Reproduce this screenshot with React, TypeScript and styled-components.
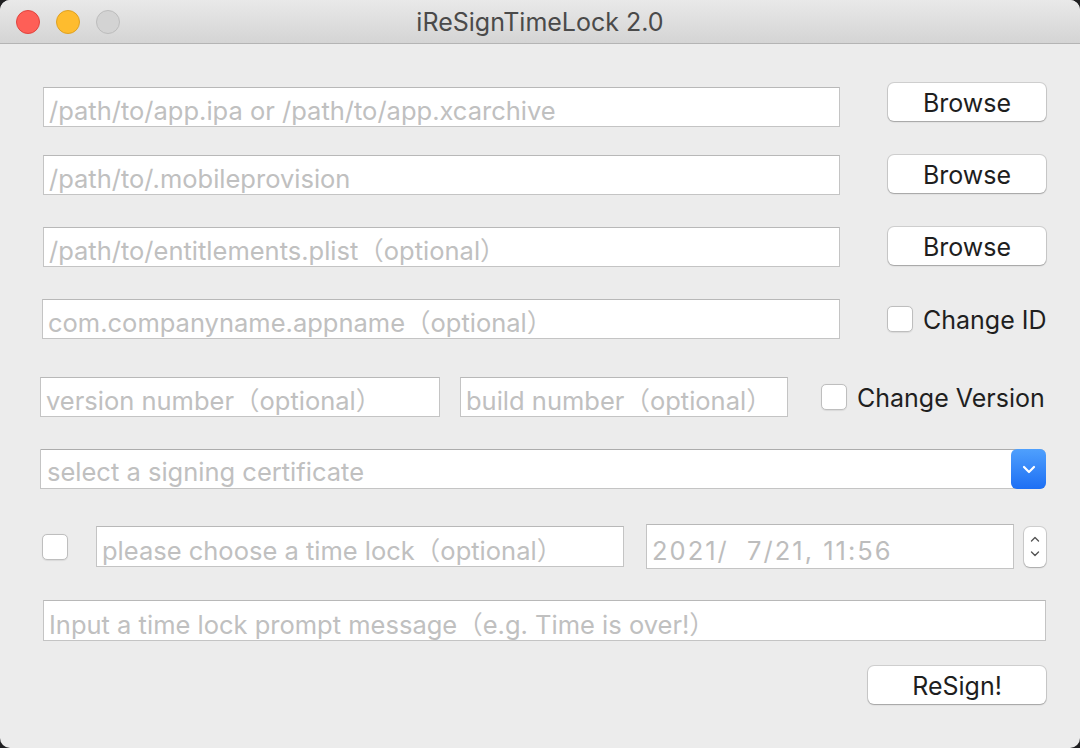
import React from "react";
import styled, { createGlobalStyle } from "styled-components";

const GlobalStyle = createGlobalStyle`
  html, body {
    margin: 0;
    padding: 0;
    background: #1f1f21;
  }
  * { box-sizing: border-box; }
`;

const FONT = `Inter, "Noto Sans", "Noto Sans CJK SC", sans-serif`;

const Window = styled.div`
  width: 1080px;
  height: 748px;
  border-radius: 10px;
  overflow: hidden;
  background: #ececec;
  font-family: ${FONT};
  display: flex;
  flex-direction: column;
`;

const TitleBar = styled.div`
  height: 44px;
  flex-shrink: 0;
  position: relative;
  display: flex;
  align-items: center;
  justify-content: center;
  background: linear-gradient(#e9e9e9, #d4d4d4);
  border-bottom: 1px solid #b4b4b4;
`;

const Lights = styled.div`
  position: absolute;
  left: 16px;
  top: 10px;
  display: flex;
  gap: 16px;
`;

const Light = styled.span<{ $fill: string; $edge: string }>`
  width: 24px;
  height: 24px;
  border-radius: 50%;
  background: ${(p) => p.$fill};
  border: 1px solid ${(p) => p.$edge};
`;

const Title = styled.div`
  font-size: 25px;
  color: #4a4a4a;
  margin-top: 1px;
`;

const Body = styled.div`
  flex: 1;
  display: flex;
  flex-direction: column;
  padding: 0 34px 0 40px;
`;

const Row = styled.div<{ $top: number; $indent?: number; $align?: string }>`
  display: flex;
  align-items: ${(p) => p.$align || "center"};
  margin-top: ${(p) => p.$top}px;
  padding-left: ${(p) => p.$indent || 0}px;
`;

const Field = styled.input<{ $w?: number; $h?: number; $offset?: number; $spread?: number }>`
  width: ${(p) => (p.$w ? `${p.$w}px` : "auto")};
  flex: ${(p) => (p.$w ? "none" : "1")};
  min-width: 0;
  height: ${(p) => p.$h || 40}px;
  margin-top: ${(p) => p.$offset || 0}px;
  background: #fff;
  border: 1px solid #c4c4c4;
  border-top-color: #b8b8b8;
  padding: 7px 0 0 5px;
  font-family: ${FONT};
  font-size: 25.5px;
  letter-spacing: ${(p) => p.$spread || 0}px;
  color: #bdbdbd;
  outline: none;
  white-space: pre;
  &::placeholder {
    color: #c0c0c0;
  }
`;

const Button = styled.button<{ $w: number }>`
  width: ${(p) => p.$w}px;
  height: 38px;
  background: #fff;
  border: none;
  border-radius: 6px;
  box-shadow: 0 0 0 1px rgba(0, 0, 0, 0.12), 0 1px 1.5px rgba(0, 0, 0, 0.22);
  font-family: ${FONT};
  font-size: 25px;
  color: #1e1e1e;
  padding: 1px 0 0;
  flex-shrink: 0;
`;

const Gap = styled.div<{ $w: number }>`
  width: ${(p) => p.$w}px;
  flex-shrink: 0;
`;

const Box = styled.span`
  width: 26px;
  height: 26px;
  flex-shrink: 0;
  background: #fff;
  border: 1px solid #bebebe;
  border-radius: 5px;
  box-shadow: 0 0.5px 1px rgba(0, 0, 0, 0.08);
`;

const Label = styled.span`
  font-size: 25px;
  color: #1f1f1f;
  margin-left: 10px;
  padding-top: 2px;
  white-space: nowrap;
`;

const Select = styled.div`
  flex: 1;
  height: 40px;
  display: flex;
  background: #fff;
  border: 1px solid #c4c4c4;
  border-top-color: #acacac;
  border-right: none;
  border-radius: 0 6px 6px 0;
`;

const SelectText = styled.span`
  flex: 1;
  font-size: 25.5px;
  color: #c0c0c0;
  padding: 6px 0 0 6px;
`;

const Arrow = styled.span`
  width: 35px;
  margin: -1px 0;
  display: flex;
  align-items: center;
  justify-content: center;
  background: linear-gradient(#4fa0fd, #1d6ff4);
  border-radius: 6px;
`;

const Stepper = styled.span`
  width: 22px;
  height: 40px;
  flex-shrink: 0;
  display: flex;
  flex-direction: column;
  align-items: center;
  justify-content: center;
  gap: 9px;
  background: #fff;
  border-radius: 6px;
  box-shadow: 0 0 0 1px rgba(0, 0, 0, 0.12), 0 1px 1.5px rgba(0, 0, 0, 0.18);
`;

const Spacer = styled.div`
  flex: 1;
`;

export default function App() {
  return (
    <>
      <GlobalStyle />
      <Window>
        <TitleBar>
          <Lights>
            <Light $fill="#fe5f57" $edge="#e0443e" />
            <Light $fill="#febc2e" $edge="#dea123" />
            <Light $fill="#d3d3d3" $edge="#bcbcbc" />
          </Lights>
          <Title>iReSignTimeLock 2.0</Title>
        </TitleBar>
        <Body>
          <Row $top={39} $indent={3} $align="flex-start">
            <Field $w={797} $offset={4} placeholder="/path/to/app.ipa or /path/to/app.xcarchive" />
            <Gap $w={48} />
            <Button $w={158}>Browse</Button>
          </Row>
          <Row $top={28} $indent={3} $align="flex-start">
            <Field $w={797} placeholder="/path/to/.mobileprovision" />
            <Gap $w={48} />
            <Button $w={158}>Browse</Button>
          </Row>
          <Row $top={32} $indent={3} $align="flex-start">
            <Field $w={797} placeholder="/path/to/entitlements.plist（optional）" />
            <Gap $w={48} />
            <Button $w={158}>Browse</Button>
          </Row>
          <Row $top={32} $indent={2}>
            <Field $w={798} placeholder="com.companyname.appname（optional）" />
            <Gap $w={47} />
            <Box />
            <Label>Change ID</Label>
          </Row>
          <Row $top={38}>
            <Field $w={400} placeholder="version number（optional）" />
            <Gap $w={20} />
            <Field $w={328} placeholder="build number（optional）" />
            <Gap $w={33} />
            <Box />
            <Label>Change Version</Label>
          </Row>
          <Row $top={32}>
            <Select>
              <SelectText>select a signing certificate</SelectText>
              <Arrow>
                <svg width="14" height="9" viewBox="0 0 14 9">
                  <path d="M2 2l5 5 5-5" fill="none" stroke="#fff" strokeWidth="2.2" strokeLinecap="round" strokeLinejoin="round" />
                </svg>
              </Arrow>
            </Select>
          </Row>
          <Row $top={35} $indent={2}>
            <Box />
            <Gap $w={28} />
            <Field $w={528} $h={41} placeholder="please choose a time lock（optional）" />
            <Gap $w={22} />
            <Field $w={368} $h={45} $spread={2} readOnly value="2021/  7/21, 11:56" />
            <Gap $w={10} />
            <Stepper>
              <svg width="10" height="6" viewBox="0 0 10 6">
                <path d="M1.5 5L5 1.5 8.5 5" fill="none" stroke="#555" strokeWidth="1.4" strokeLinecap="round" strokeLinejoin="round" />
              </svg>
              <svg width="10" height="6" viewBox="0 0 10 6">
                <path d="M1.5 1L5 4.5 8.5 1" fill="none" stroke="#555" strokeWidth="1.4" strokeLinecap="round" strokeLinejoin="round" />
              </svg>
            </Stepper>
          </Row>
          <Row $top={31} $indent={3}>
            <Field $h={41} placeholder="Input a time lock prompt message（e.g. Time is over!）" />
          </Row>
          <Row $top={25}>
            <Spacer />
            <Button $w={178}>ReSign!</Button>
          </Row>
        </Body>
      </Window>
    </>
  );
}
